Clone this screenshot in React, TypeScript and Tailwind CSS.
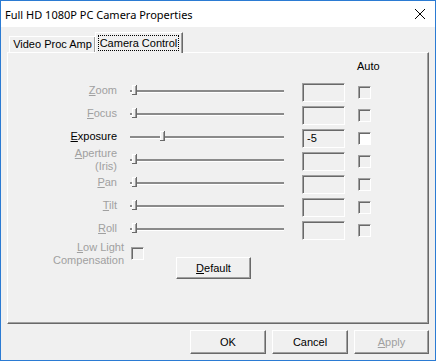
import React from "react";

const rows = [
  { label: "Zoom", key: "Z", rest: "oom", enabled: false, value: "", pos: 2 },
  { label: "Focus", key: "F", rest: "ocus", enabled: false, value: "", pos: 2 },
  { label: "Exposure", key: "E", rest: "xposure", enabled: true, value: "-5", pos: 30 },
  { label: "Aperture", key: "A", rest: "perture", enabled: false, value: "", pos: 2, second: "(Iris)" },
  { label: "Pan", key: "P", rest: "an", enabled: false, value: "", pos: 2 },
  { label: "Tilt", key: "T", rest: "ilt", enabled: false, value: "", pos: 2 },
  { label: "Roll", key: "R", rest: "oll", enabled: false, value: "", pos: 2 },
];

function Slider({ pos }: { pos: number }) {
  return (
    <div className="relative ml-[13px] -mt-[4px] w-[154px] h-[12px] flex items-center">
      <div className="w-full h-[2px] bg-[#8a8a8a] shadow-[0_1px_0_#ffffff]" />
      <svg className="absolute top-[0px]" style={{ left: pos }} width="5" height="10" viewBox="0 0 5 10">
        <rect x="0" y="0" width="5" height="10" fill="#f0f0f0" />
        <line x1="0.5" y1="0" x2="0.5" y2="10" stroke="#ffffff" />
        <line x1="0" y1="0.5" x2="5" y2="0.5" stroke="#ffffff" />
        <line x1="4.5" y1="0" x2="4.5" y2="10" stroke="#696969" />
        <line x1="0" y1="9.5" x2="5" y2="9.5" stroke="#696969" />
        <line x1="3.5" y1="1" x2="3.5" y2="9" stroke="#a0a0a0" />
      </svg>
    </div>
  );
}

function CheckBox({ enabled, className = "" }: { enabled: boolean; className?: string }) {
  return (
    <div
      className={`w-[13px] h-[13px] border-t border-l border-[#a0a0a0] border-r border-b border-r-white border-b-white shadow-[inset_1px_1px_0_#696969] ${
        enabled ? "bg-white" : "bg-[#f0f0f0]"
      } ${className}`}
    />
  );
}

function Button({ children, className = "" }: { children: React.ReactNode; className?: string }) {
  return (
    <div
      className={`h-[24px] flex items-center justify-center border-t border-l border-white border-r border-b border-r-[#696969] border-b-[#696969] shadow-[inset_-1px_-1px_0_#a0a0a0] ${className}`}
    >
      {children}
    </div>
  );
}

export default function App() {
  return (
    <div className="w-[436px] h-[361px] border border-[#2b7bd3] bg-[#f0f0f0] flex flex-col font-['Liberation_Sans',Arial,sans-serif] text-[11px] leading-[13px] text-black">
      {/* Title bar */}
      <div className="h-[26px] shrink-0 bg-white flex items-center justify-between pl-[4px] pr-[10px]">
        <span className="text-[11px] font-['Noto_Sans',sans-serif] text-[#000]">Full HD 1080P PC Camera Properties</span>
        <svg width="10" height="10" viewBox="0 0 10 10">
          <path d="M0 0 L10 10 M10 0 L0 10" stroke="#000" strokeWidth="1" />
        </svg>
      </div>

      <div className="flex-1 px-[6px] flex flex-col">
        {/* Tabs */}
        <div className="h-[25px] flex items-end pl-[2px]">
          <div className="h-[16px] w-[87px] flex items-center justify-center border-t border-l border-white border-r border-r-[#696969] shadow-[inset_-1px_0_0_#a0a0a0]">
            Video Proc Amp
          </div>
          <div className="relative z-10 -mb-[1px] h-[21px] w-[88px] -ml-[1px] bg-[#f0f0f0] border-t border-l border-white border-r border-r-[#696969] shadow-[inset_-1px_0_0_#a0a0a0] p-[2px] pr-[3px]">
            <div className="h-full border border-dotted border-black flex items-center justify-center">
              Camera Control
            </div>
          </div>
        </div>

        {/* Panel */}
        <div className="w-[422px] h-[272px] border-t border-l border-white border-r border-b border-r-[#696969] border-b-[#696969] shadow-[inset_-1px_-1px_0_#a0a0a0] flex flex-col">
          <div className="pt-[7px] pl-[349px] h-[28px]">Auto</div>
          {rows.map((r) => (
            <div key={r.label} className="h-[23px] flex items-center">
              <div className={`w-[109px] -mt-[4px] text-right ${r.enabled ? "text-black" : "text-[#a0a0a0]"}`}>
                <div>
                  <span className="underline underline-offset-[1px]">{r.key}</span>
                  {r.rest}
                </div>
                {r.second && <div>{r.second}</div>}
              </div>
              <Slider pos={r.pos} />
              <div className="ml-[18px] w-[43px] h-[19px] flex items-center pl-[4px] border-t border-l border-[#a0a0a0] border-r border-b border-r-white border-b-white shadow-[inset_1px_1px_0_#696969]">
                {r.value}
              </div>
              <CheckBox enabled={r.enabled} className="ml-[13px]" />
            </div>
          ))}
          <div className="flex items-start -mt-[1px]">
            <div className="w-[116px] text-right text-[#a0a0a0]">
              <div>
                <span className="underline underline-offset-[1px]">L</span>ow Light
              </div>
              <div>Compensation</div>
            </div>
            <CheckBox enabled={false} className="ml-[7px] mt-[6px]" />
            <Button className="ml-[32px] mt-[16px] w-[75px] !h-[22px]">
              <span>
                <span className="underline underline-offset-[1px]">D</span>efault
              </span>
            </Button>
          </div>
        </div>

        {/* Dialog buttons */}
        <div className="mt-[6px] flex justify-end gap-[6px]">
          <Button className="w-[76px]">OK</Button>
          <Button className="w-[76px]">Cancel</Button>
          <Button className="w-[75px] text-[#a0a0a0]">
            <span>
              <span className="underline underline-offset-[1px]">A</span>pply
            </span>
          </Button>
        </div>
      </div>
    </div>
  );
}
